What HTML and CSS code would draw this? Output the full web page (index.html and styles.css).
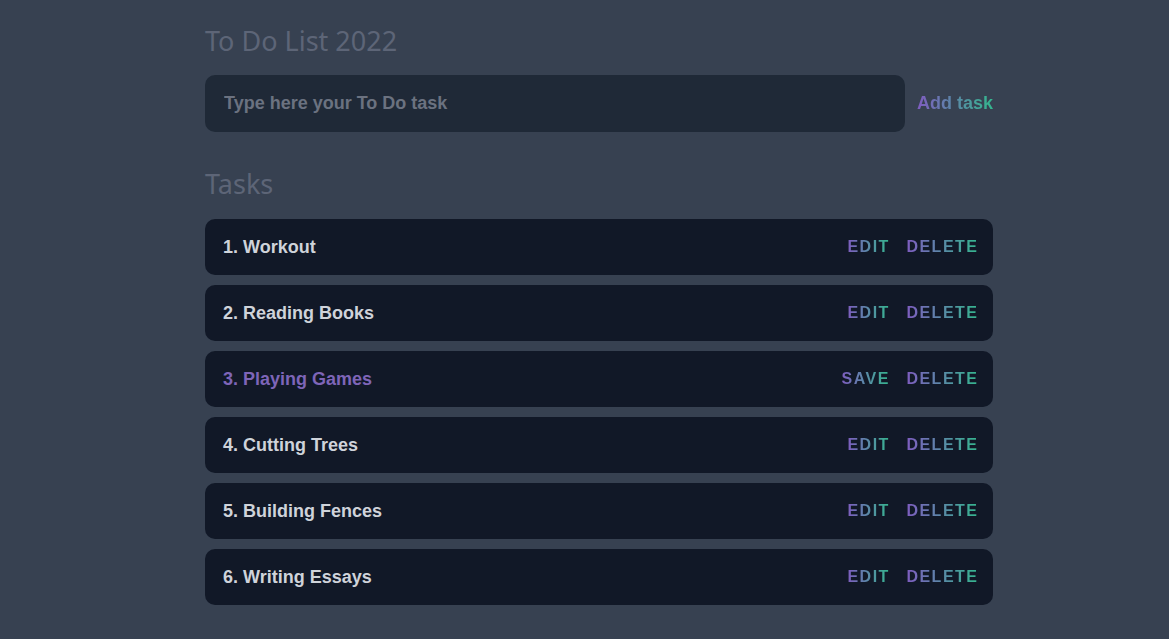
FILE: index.html
```html
<!DOCTYPE html>
<html lang="en">
<head>
<meta charset="utf-8">
<title>To Do List 2022</title>
<link rel="stylesheet" href="styles.css">
</head>
<body>
<main class="app">
  <h1 class="title">To Do List 2022</h1>
  <form class="new-task">
    <input class="new-task-input" type="text" placeholder="Type here your To Do task">
    <button class="add-btn grad" type="button">Add task</button>
  </form>
  <h2 class="subtitle">Tasks</h2>
  <ul class="tasks">
    <li class="task"><span class="task-text">1. Workout</span><div class="actions"><button class="act grad">EDIT</button><button class="act grad">DELETE</button></div></li>
    <li class="task"><span class="task-text">2. Reading Books</span><div class="actions"><button class="act grad">EDIT</button><button class="act grad">DELETE</button></div></li>
    <li class="task editing"><span class="task-text">3. Playing Games</span><div class="actions"><button class="act grad">SAVE</button><button class="act grad">DELETE</button></div></li>
    <li class="task"><span class="task-text">4. Cutting Trees</span><div class="actions"><button class="act grad">EDIT</button><button class="act grad">DELETE</button></div></li>
    <li class="task"><span class="task-text">5. Building Fences</span><div class="actions"><button class="act grad">EDIT</button><button class="act grad">DELETE</button></div></li>
    <li class="task"><span class="task-text">6. Writing Essays</span><div class="actions"><button class="act grad">EDIT</button><button class="act grad">DELETE</button></div></li>
  </ul>
</main>
</body>
</html>
```
FILE: styles.css
```css
* { box-sizing: border-box; }
html, body { margin: 0; padding: 0; }
body {
  background: #374151;
  font-family: "Liberation Sans", Arial, sans-serif;
  min-height: 639px;
  padding-left: 29px;
}
.app {
  width: 788px;
  margin: 0 auto;
  padding-top: 22px;
  display: flex;
  flex-direction: column;
}
.title {
  margin: 0;
  font-family: "Noto Sans", sans-serif;
  font-weight: 400;
  font-size: 27px;
  line-height: 38px;
  color: #5d6577;
}
.new-task {
  display: flex;
  align-items: center;
  gap: 12px;
  margin-top: 15px;
}
.new-task-input {
  width: 700px;
  height: 57px;
  border: none;
  outline: none;
  border-radius: 10px;
  background: #1f2937;
  padding: 0 19px;
  font-family: "Liberation Sans", Arial, sans-serif;
  font-size: 18px;
  font-weight: 700;
  color: #d1d5db;
}
.new-task-input::placeholder { color: #6b7280; }
.grad {
  background: linear-gradient(to right, #7f5cc0, #34b78e);
  -webkit-background-clip: text;
  background-clip: text;
  color: transparent;
  border: none;
  padding: 0;
  cursor: pointer;
  font-family: "Liberation Sans", Arial, sans-serif;
  font-weight: 700;
}
.add-btn {
  font-size: 18px;
}
.subtitle {
  margin: 34px 0 0;
  font-family: "Noto Sans", sans-serif;
  font-weight: 400;
  font-size: 27px;
  line-height: 36px;
  color: #5d6577;
}
.tasks {
  list-style: none;
  margin: 17px 0 0;
  padding: 0;
  display: flex;
  flex-direction: column;
  gap: 10px;
}
.task {
  height: 56px;
  background: #111827;
  border-radius: 10px;
  display: flex;
  align-items: center;
  justify-content: space-between;
  padding: 0 16px 0 18px;
}
.task-text {
  font-size: 18px;
  font-weight: 700;
  color: #cfd3da;
}
.task.editing .task-text { color: #7e65b8; }
.actions {
  display: flex;
  gap: 18px;
}
.act {
  font-size: 16px;
  letter-spacing: 1.5px;
  margin-right: -1.5px;
}
```
